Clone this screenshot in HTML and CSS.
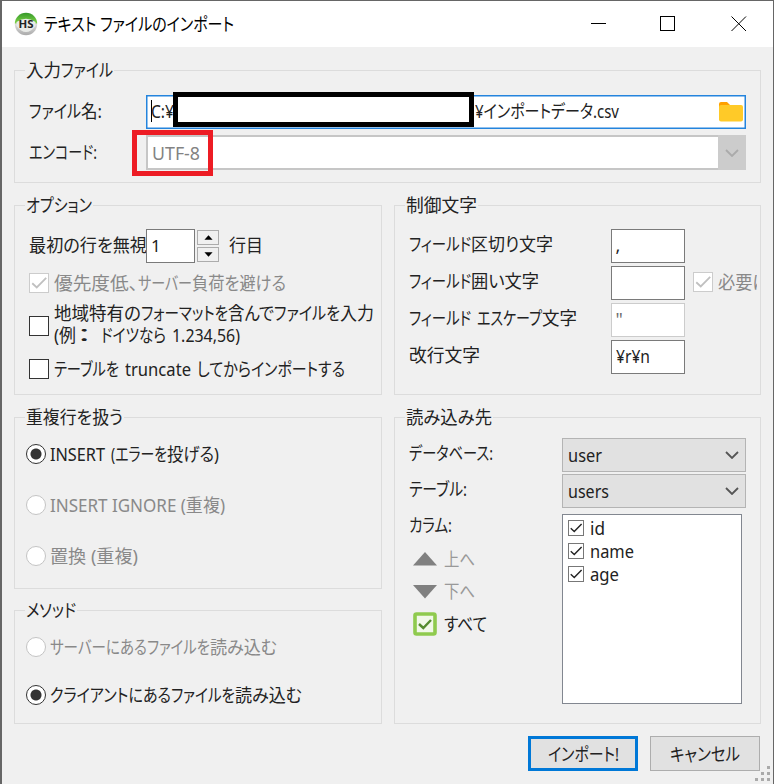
FILE: index.html
```html
<!DOCTYPE html>
<html lang="ja">
<head>
<meta charset="utf-8">
<title>テキスト ファイルのインポート</title>
<link rel="stylesheet" href="styles.css">
</head>
<body>
<svg width="0" height="0" class="defs"><defs>
<symbol id="tick" viewBox="0 0 20 20"><path d="M2.5 10.3 7.5 15 18 4.3" fill="none" stroke="currentColor" stroke-width="2"/></symbol>
<symbol id="chev" viewBox="0 0 14 8"><path d="M1 1 7 7 13 1" fill="none" stroke="currentColor" stroke-width="1.8"/></symbol>
</defs></svg>
<div class="window">
<header class="titlebar">
<svg class="logo" viewBox="0 0 24 24"><defs><linearGradient id="g" x1="0" y1="0" x2="0" y2="1"><stop offset="0" stop-color="#35982a"/><stop offset=".45" stop-color="#7bd145"/><stop offset=".5" stop-color="#ddd"/><stop offset="1" stop-color="#aaa"/></linearGradient></defs><circle cx="12" cy="12" r="11.2" fill="url(#g)"/><path d="M2.5 10Q12 3.5 21.5 10V14Q12 26 2.5 14Z" fill="#e8eae7"/><text x="12" y="15.7" text-anchor="middle" textLength="15" lengthAdjust="spacingAndGlyphs">HS</text></svg>
<h1><span class="fit" data-w="190">テキスト ファイルのインポート</span></h1>
<svg class="wbtn" viewBox="0 0 16 16"><path d="M0 7.5H15"/></svg>
<svg class="wbtn" viewBox="0 0 16 16"><path d="M.5.5H14.5V14.5H.5Z"/></svg>
<svg class="wbtn" viewBox="0 0 16 16"><path d="M.5.5 15 15M15 .5.5 15"/></svg>
</header>
<main>
<section class="group source">
<h2><span class="fit" data-w="35">入力</span><span class="fit" data-w="52">ファイル</span></h2>
<div class="row path"><label><span class="fit" data-w="52">ファイル</span><span class="fit" data-w="21">名:</span></label>
<div class="edit focus"><i class="caret"></i><span class="fit" data-w="23">C:¥</span><span class="fit tail" data-w="144">¥インポートデータ.csv</span>
<svg class="folder" viewBox="0 0 24 20"><path d="M0 4V2Q0 0 2 0H8L11 3V6H0Z" fill="#ffa000"/><rect y="3" width="24" height="16.5" rx="2" fill="#ffca28"/></svg><b class="mask"></b></div></div>
<div class="row enc"><label><span class="fit" data-w="68">エンコード:</span></label>
<div class="encbox"><span class="fit" data-w="48">UTF-8</span><i class="drop"><svg class="chev"><use href="#chev"/></svg></i><b class="mark"></b></div></div>
</section>
<div class="columns">
<div class="col">
<section class="group options">
<h2><span class="fit" data-w="66">オプション</span></h2>
<div class="row skip"><label><span class="fit" data-w="118">最初の行を無視</span></label><div class="edit num">1</div><div class="spin"><i><svg viewBox="0 0 10 5"><path d="M5 0 9.5 5H.5Z"/></svg></i><i><svg viewBox="0 0 10 5"><path d="M5 5 9.5 0H.5Z"/></svg></i></div><span class="fit" data-w="34">行目</span></div>
<div class="row check off low"><i class="box"><svg><use href="#tick"/></svg></i><span><span class="fit" data-w="84">優先度低、</span><span class="fit" data-w="54">サーバー</span><span class="fit" data-w="94">負荷を避ける</span></span></div>
<div class="row check local"><i class="box"></i><span><span class="fit" data-w="87">地域特有の</span><span class="fit" data-w="87">フォーマットを</span><span class="fit" data-w="46">含んで</span><span class="fit" data-w="66">ファイルを</span><span class="fit" data-w="34">入力</span><br><span class="fit" data-w="22">(例</span><span class="fit" data-w="25">： </span><span class="fit" data-w="65">ドイツなら</span><span class="fit gap" data-w="68">1.234,56)</span></span></div>
<div class="row check trunc"><i class="box"></i><span><span class="fit" data-w="65">テーブルを</span><span class="fit gap" data-w="66">truncate</span><span class="fit gap2" data-w="54">してから</span><span class="fit gap2" data-w="94">インポートする</span></span></div>
</section>
<section class="group dup">
<h2><span class="fit" data-w="97">重複行を扱う</span></h2>
<div class="row radio on"><i></i><span class="fit" data-w="55">INSERT</span><span class="fit gap" data-w="56">(エラーを</span><span class="fit" data-w="52">投げる)</span></div>
<div class="row radio off"><i></i><span class="fit" data-w="175">INSERT IGNORE (重複)</span></div>
<div class="row radio off"><i></i><span class="fit" data-w="88">置換 (重複)</span></div>
</section>
<section class="group method">
<h2><span class="fit" data-w="50">メソッド</span></h2>
<div class="row radio off"><i></i><span class="fit" data-w="97">サーバーにある</span><span class="fit" data-w="63">ファイルを</span><span class="fit" data-w="67">読み込む</span></div>
<div class="row radio on"><i></i><span class="fit" data-w="121">クライアントにある</span><span class="fit" data-w="64">ファイルを</span><span class="fit" data-w="67">読み込む</span></div>
</section>
</div>
<div class="col">
<section class="group control">
<h2><span class="fit" data-w="71">制御文字</span></h2>
<div class="row"><label><span class="fit" data-w="62">フィールド</span><span class="fit" data-w="82">区切り文字</span></label><div class="edit">,</div></div>
<div class="row"><label><span class="fit" data-w="62">フィールド</span><span class="fit" data-w="68">囲い文字</span></label><div class="edit"></div><div class="check off need"><i class="box"><svg><use href="#tick"/></svg></i><span class="clip"><span class="fit" data-w="51">必要に</span></span></div></div>
<div class="row"><label><span class="fit" data-w="62">フィールド</span><span class="fit gap" data-w="65">エスケープ</span><span class="fit" data-w="35">文字</span></label><div class="edit off">"</div></div>
<div class="row"><label><span class="fit" data-w="71">改行文字</span></label><div class="edit"><span class="fit" data-w="34">¥r¥n</span></div></div>
</section>
<section class="group dest">
<h2><span class="fit" data-w="86">読み込み先</span></h2>
<div class="destgrid">
<div class="labels">
<div><span class="fit" data-w="84">データベース:</span></div>
<div><span class="fit" data-w="58">テーブル:</span></div>
<div><span class="fit" data-w="43">カラム:</span></div>
<div class="tool off"><svg viewBox="0 0 24 24"><path d="M12 5 24 18.5H0Z" fill="#808080"/></svg><span class="fit" data-w="31">上へ</span></div>
<div class="tool off"><svg viewBox="0 0 24 24"><path d="M12 19.5 24 6H0Z" fill="#808080"/></svg><span class="fit" data-w="31">下へ</span></div>
<div class="tool"><svg viewBox="0 0 24 24"><rect x="2" y="2" width="20" height="20" rx="1.5" fill="#f1f8e9" stroke="#8fca4e" stroke-width="3.6"/><path d="M6 12 10.3 16 18 8" fill="none" stroke="#558b2f" stroke-width="2.4"/></svg><span class="fit" data-w="43">すべて</span></div>
</div>
<div class="fields">
<div class="combo"><span class="fit" data-w="34">user</span><svg class="chev"><use href="#chev"/></svg></div>
<div class="combo"><span class="fit" data-w="41">users</span><svg class="chev"><use href="#chev"/></svg></div>
<ul class="list">
<li><i class="box"><svg><use href="#tick"/></svg></i><span class="fit" data-w="15">id</span></li>
<li><i class="box"><svg><use href="#tick"/></svg></i><span class="fit" data-w="44">name</span></li>
<li><i class="box"><svg><use href="#tick"/></svg></i><span class="fit" data-w="29">age</span></li>
</ul>
</div>
</div>
</section>
</div>
</div>
<footer><button class="primary"><span class="fit" data-w="71">インポート!</span></button><button><span class="fit" data-w="70">キャンセル</span></button></footer>
</main>
<svg class="grip" viewBox="0 0 16 16"><path d="M12 0h3v3h-3zM6 6h3v3h-3zM12 6h3v3h-3zM0 12h3v3h-3zM6 12h3v3h-3zM12 12h3v3h-3z" fill="#aaa"/></svg>
</div>
<script src="fit.js"></script>
</body>
</html>
```
FILE: styles.css
```css
*{box-sizing:border-box}
body{margin:0;width:774px;height:784px;overflow:hidden;color:#222;font:18px/24px "Noto Sans","Noto Sans CJK JP",sans-serif;font-feature-settings:"palt"}
h1,h2,ul{margin:0;padding:0;font:inherit;list-style:none}
i{font-style:normal}
.defs{position:absolute}
.fit{display:inline-block;white-space:pre;transform-origin:0 50%}
.gap{position:relative;left:6px}
.gap + .fit{position:relative;left:6px}
.fit.gap2{position:relative;left:12px}
.window{position:relative;width:774px;height:784px;background:#f0f0f0;border:1px solid #666;border-width:1px 1px 0 2px}
.titlebar{height:46px;background:#fff;display:flex;align-items:center;padding-left:12px;color:#000}
.logo{width:24px;height:24px;margin-right:6px;margin-top:-1px}
.logo text{font:bold 11px "Open Sans",sans-serif;fill:#222}
h1{flex:1;padding-bottom:1px}
.wbtn{width:16px;height:16px;fill:none;stroke:#000;margin-left:53px;shape-rendering:crispEdges}
.wbtn:nth-of-type(2){margin-left:0}
.wbtn:last-child{margin-left:55px;margin-right:26px;shape-rendering:auto}
main{padding:23px 12px 0}
.group{border:1px solid #dcdcdc}
h2{margin:-13px 0 0 10px;height:24px;width:max-content;background:#f0f0f0;padding:0 1px}
.row{display:flex;align-items:center}
.edit{position:relative;height:34px;background:#fff;border:1.5px solid #7a7a7a;padding:4px 4px 0;white-space:nowrap}
.edit.off{border-color:#ccc;color:#6d6d6d}
.source{height:113px}
.source label{width:117px;padding-bottom:2px}
.source .row{padding-left:14px}
.path{margin-top:13px;height:34px}
.path .edit{width:600px;border:1px solid #2484dd;box-shadow:inset 0 0 0 .5px #2484dd;display:flex;padding:3px 2px 0 4px}
.caret{position:absolute;left:4px;top:4px;width:1px;height:22px;background:#000}
.tail{position:absolute;left:328px}
.folder{position:absolute;right:2px;top:6px;width:24px;height:20px}
.mask{position:absolute;left:26px;top:-4px;width:301px;height:35px;border:5px solid #000;background:#fff}
.enc{height:35px;margin-top:6px}
.encbox{position:relative;display:flex;width:600px;height:35px;background:#fff;border:2px solid #c6c6c6;padding:4px 0 0 4px;color:#838383}
.drop{position:absolute;right:-2px;top:-2px;width:28px;height:35px;background:#ccc;color:#aaa;display:flex;align-items:center;justify-content:center}
.chev{width:14px;height:8px}
.mark{position:absolute;left:-16px;top:-7px;width:81px;height:46px;border:5px solid #ed1c24}
.columns{display:flex;gap:12px;margin-top:22px}
.col:first-child{width:368px}
.col:last-child{width:368px}
.options,.control{height:190px}
.options .row{padding-left:14px}
.skip{height:34px;margin-top:12px}
.skip label{width:117px;white-space:nowrap}
.skip label,.skip > .fit{padding-bottom:2px}
.num{width:49px;font-size:17px}
.spin{width:22px;margin:0 10px 0 2px;display:grid;gap:2px}
.spin i{height:15px;border:1px solid #acacac;background:#f0f0f0;display:grid;place-items:center}
.spin svg{width:9px;height:5px}
.off{color:#898989}
.check .box{flex:none}
.box{display:block;width:20px;height:20px;border:1.5px solid #333;background:#fff;margin-right:5px}
.off .box{border-color:#ccc;color:#c0c0c0}
.box svg{display:block;width:100%;height:100%}
.low{height:24px;margin-top:8px}
.local{height:44px;line-height:22px;margin-top:7px}
.local .box{margin-top:3px}
.trunc{height:24px;margin-top:11px}
.dup{height:172px;margin-top:22px}
.radio{padding-left:11px;height:24px}
.radio i{width:20px;height:20px;border:1.5px solid #c4c4c4;border-radius:50%;background:#fff;margin-right:4px}
.radio.on i{border-color:#333;background:radial-gradient(circle,#333 5px,#fff 6px)}
.dup .radio{margin-bottom:27px}
.dup h2{margin-bottom:13px}
.method{height:114px;margin-top:21px}
.method h2{margin-bottom:13px}
.method .radio{margin-bottom:24px}
.control .row{height:34px;padding-left:14px}
.control label{width:202px;padding-bottom:4px}
.control h2{margin-bottom:12px}
.control .row:nth-of-type(1),.control .row:nth-of-type(2){margin-bottom:3px}
.control .row:nth-of-type(3){margin-bottom:3px}
.control .edit{width:74px;padding-top:3px}
.need{display:flex;align-items:center;margin-left:8px;padding-bottom:2px}
.clip{width:39px;overflow:hidden}
.dest{height:307px;margin-top:22px}
.dest h2{margin-bottom:9px}
.destgrid{display:flex;padding-left:14px}
.labels{width:153px;display:grid;grid-template-rows:36px 36px 33px 32px 33px 33px;height:203px;line-height:30px}
.tool{display:flex;align-items:center;padding-left:4px;margin-top:-1px}
.tool svg{width:24px;height:24px;margin-right:7px}
.tool.off{color:#999}
.combo{width:184px;height:34px;margin-bottom:2px;background:#e1e1e1;border:1.5px solid #b4b4b4;display:flex;align-items:center;justify-content:space-between;padding:0 6px 0 5px}
.combo .chev{color:#555}
.list{width:180px;height:190px;margin-top:6px;border:1.5px solid #828790;background:#fff;padding:1px 5px}
.list li{height:23px;display:flex;align-items:center}
.list .box{width:16px;height:16px;border:1px solid #777;margin-right:6px}
footer{display:flex;justify-content:flex-end;gap:12px;margin:12px 1px 0 0}
button{width:110px;height:35px;padding:0;background:#e1e1e1;border:1.5px solid #adadad;font:inherit;color:#222;font-feature-settings:inherit}
.primary{border:3px solid #0078d7}
.grip{position:absolute;right:2px;bottom:2px;width:16px;height:16px}
```
FILE: fit.js
```
document.querySelectorAll('.fit').forEach(function (el) {
  var natural = el.getBoundingClientRect().width;
  var wanted = Number(el.dataset.w);
  el.style.transform = 'scaleX(' + wanted / natural + ')';
  el.style.marginRight = wanted - natural + 'px';
});
```
